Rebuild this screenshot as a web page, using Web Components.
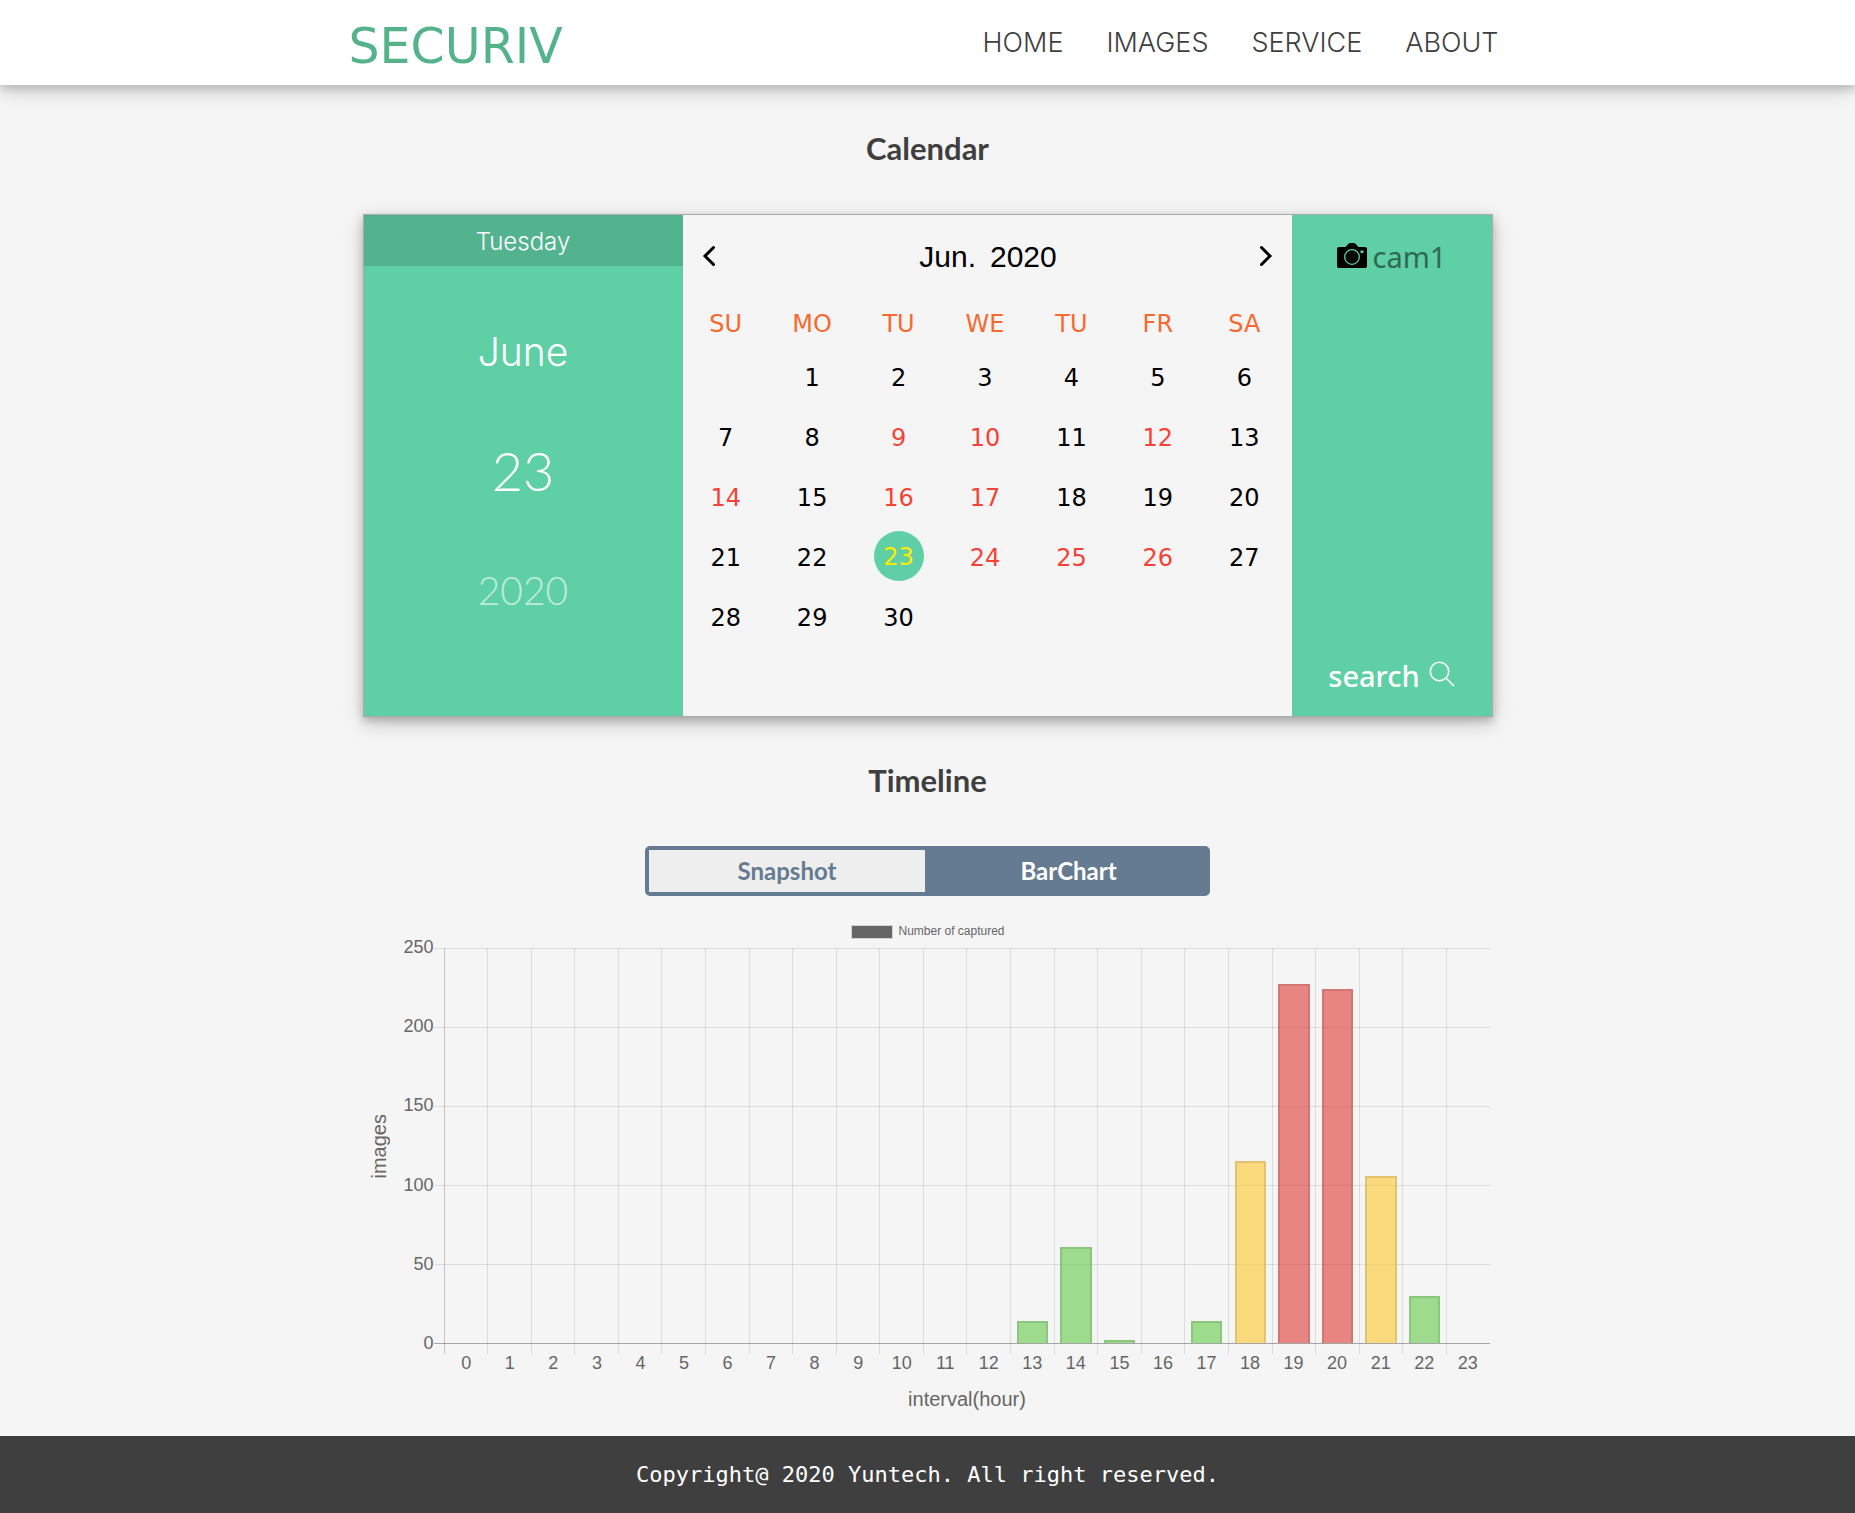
<!DOCTYPE html>
<html lang="en">
<head>
<meta charset="utf-8">
<meta name="viewport" content="width=device-width, initial-scale=1">
<title>SECURIV</title>
<style>
  body { margin: 0; background: #f5f5f5; color: #3f3f3f; font-family: "Noto Sans", sans-serif; }
</style>
</head>
<body>
<securiv-app></securiv-app>
<script>
function define(name, render) {
  customElements.define(name, class extends HTMLElement {
    connectedCallback() {
      if (this.shadowRoot) return;
      const template = document.createElement('template');
      template.innerHTML = render(this);
      this.attachShadow({ mode: 'open' }).append(template.content.cloneNode(true));
    }
  });
}

define('site-header', () => `
  <style>
    :host { display: block; position: relative; background: #fff; box-shadow: 0 4px 8px 0 rgba(0,0,0,.16), 0 6px 20px 0 rgba(0,0,0,.15); }
    .bar { box-sizing: border-box; max-width: 1158px; height: 85px; margin: 0 auto; padding-right: 8px; display: flex; align-items: center; justify-content: space-between; }
    .logo { color: #54b38a; font: 49px/60px "DejaVu Sans", sans-serif; text-decoration: none; padding-top: 8px; }
    nav { display: flex; gap: 43px; }
    nav ::slotted(a) { color: #3f3f3f; font: 300 27px/32px Inter, sans-serif; text-decoration: none; }
  </style>
  <header class="bar"><a class="logo" href="#">SECURIV</a><nav><slot></slot></nav></header>`);

define('page-section', el => `
  <style>
    :host { display: block; }
    h2 { margin: 0; padding-bottom: 2px; text-align: center; font: bold 31px/127px Lato, sans-serif; color: #3f3f3f; }
  </style>
  <section><h2>${el.getAttribute('heading')}</h2><slot></slot></section>`);

define('date-panel', () => `
  <style>
    :host { display: block; background: #5fcfa5; color: #fff; text-align: center; font-family: Lato, sans-serif; }
    .weekday { padding-top: 2px; background: #54b38f; font: 300 24px/49px Inter, sans-serif; }
    .date { display: grid; grid-auto-rows: 120px; align-items: center; padding-top: 24px; font-weight: 300; font-size: 39px; }
    .month { padding-top: 2px; font-family: Inter, sans-serif; }
    .day { font-size: 54px; }
    .year { opacity: .6; }
  </style>
  <div class="weekday">Tuesday</div>
  <div class="date"><span class="month">June</span><span class="day">23</span><span class="year">2020</span></div>`);

define('month-grid', () => {
  const captured = new Set([9, 10, 12, 14, 16, 17, 24, 25, 26]);
  const today = 23;
  let rows = '';
  for (let week = 0; week < 5; week++) {
    rows += '<tr>';
    for (let d = 0; d < 7; d++) {
      const n = week * 7 + d;
      const cls = n === today ? 'today' : captured.has(n) ? 'has' : '';
      rows += `<td class="${cls}">${n > 0 && n < 31 ? `<span>${n}</span>` : ''}</td>`;
    }
    rows += '</tr>';
  }
  return `
  <style>
    :host { display: block; background: #f5f5f5; color: #000; }
    .top { height: 84px; padding: 0 18px; display: flex; align-items: center; justify-content: space-between; }
    .title { display: flex; gap: 14px; padding-left: 2px; font: 30px/34px "Liberation Sans", sans-serif; }
    button { border: 0; padding: 0 0 2px; background: none; width: 16px; color: inherit; }
    svg { display: block; }
    .days { padding-right: 4px; }
    table { width: 100%; table-layout: fixed; border-collapse: collapse; font: 24px/30px "DejaVu Sans", sans-serif; text-align: center; }
    th, td { box-sizing: border-box; padding: 2px 0 0; }
    th { height: 48px; font-weight: 400; color: #f7692f; }
    td { height: 60px; }
    .has { color: #f44336; }
    .today { padding: 0 0 2px; color: #ffeb00; }
    .today span { display: block; box-sizing: border-box; width: 50px; padding-top: 2px; line-height: 48px; margin: 0 auto; border-radius: 50%; background: #5fcfa5; }
  </style>
  <div class="top">
    <button aria-label="Previous month"><svg width="16" height="24" viewBox="0 0 16 24" fill="none" stroke="currentColor" stroke-width="3" stroke-linecap="round"><path d="M12.500 3.500 4 12l8.500 8.500"/></svg></button>
    <div class="title"><span>Jun.</span><span>2020</span></div>
    <button aria-label="Next month"><svg width="16" height="24" viewBox="0 0 16 24" fill="none" stroke="currentColor" stroke-width="3" stroke-linecap="round"><path d="M3.500 3.500 12 12l-8.500 8.500"/></svg></button>
  </div>
  <div class="days"><table>
    <thead><tr>${['SU', 'MO', 'TU', 'WE', 'TU', 'FR', 'SA'].map(d => `<th scope="col">${d}</th>`).join('')}</tr></thead>
    <tbody>${rows}</tbody>
  </table></div>`;
});

define('camera-panel', () => `
  <style>
    :host { display: flex; flex-direction: column; align-items: center; justify-content: space-between; box-sizing: border-box; padding: 22px 0 20px; background: #5fcfa5; }
    button { display: flex; align-items: center; border: 0; padding: 0; background: none; font: 29px/40px "Noto Sans", sans-serif; color: #fff; }
    .cam { gap: 6px; color: #2f6853; }
    .search { gap: 9px; font-weight: 500; }
  </style>
  <button class="cam"><svg width="30" height="30" viewBox="0 1 30 30">
    <path fill="#000" d="M2 6H8.500L11 3.200Q12 2 13.500 2H16.500Q18 2 19 3.200L21.500 6H28Q30 6 30 8V25Q30 27 28 27H2Q0 27 0 25V8Q0 6 2 6Z"/>
    <circle cx="15" cy="16" r="7.300" fill="none" stroke="#5fcfa5" stroke-width="1.300"/>
    <rect x="23.500" y="9.500" width="3" height="2.500" fill="#5fcfa5"/></svg><span>cam1</span></button>
  <button class="search"><span>search</span><svg width="26" height="30" viewBox="0 1 26 30" fill="none" stroke="#fff" stroke-width="1.600">
    <circle cx="10.500" cy="11.500" r="9.200"/><path d="M17 18l8 8"/></svg></button>`);

define('calendar-card', () => `
  <style>
    :host { display: grid; grid-template-columns: 319fr 609fr 200fr; grid-template-rows: 501px; border: 1px solid #aaa; box-shadow: 0 4px 8px 0 rgba(0,0,0,.2), 0 6px 20px 0 rgba(0,0,0,.19); }
  </style>
  <date-panel></date-panel><month-grid></month-grid><camera-panel></camera-panel>`);

define('view-toggle', () => `
  <style>
    :host { display: grid; grid-template-columns: 276fr 281fr; box-sizing: border-box; width: 50%; height: 50px; margin: 0 auto; border: 4px solid #657b91; border-radius: 5px; background: #657b91; }
    button { border: 0; padding: 0; font: bold 24px/28px Lato, sans-serif; color: #657b91; background: #eee; }
    .on { border-left: 6px solid #657b91; color: #fff; background: #657b91; }
  </style>
  <button aria-pressed="false">Snapshot</button><button class="on" aria-pressed="true">BarChart</button>`);

define('bar-chart', () => {
  const counts = [0, 0, 0, 0, 0, 0, 0, 0, 0, 0, 0, 0, 0, 14, 61, 2, 0, 14, 115, 227, 224, 106, 30, 0];
  const level = v => v > 200 ? 'high' : v > 100 ? 'mid' : 'low';
  return `
  <style>
    :host { display: block; padding: 27px 3px 25px 0; color: #666; font-family: "Liberation Sans", sans-serif; }
    .legend { display: flex; justify-content: center; align-items: center; gap: 5px; height: 16px; margin-bottom: 9px; padding-left: 4px; font-size: 12px; line-height: 16px; }
    .swatch { box-sizing: border-box; width: 42px; height: 14px; margin-top: 2px; background: #666; border: 1px solid #d5d5d5; }
    .chart { display: grid; grid-template-columns: 34px 37px 1fr; grid-template-rows: 396px auto auto; }
    .ytitle { justify-self: start; padding-right: 4px; align-self: center; writing-mode: vertical-rl; transform: rotate(180deg); font-size: 20px; line-height: 24px; }
    .yticks { display: flex; flex-direction: column; justify-content: space-between; margin: -11px 0 -9px; text-align: right; font-size: 18px; line-height: 20px; }
    .plot { padding-left: 10px; background:
      linear-gradient(rgba(0,0,0,.25), rgba(0,0,0,.25)) 0 100% / 100% 1px no-repeat,
      repeating-linear-gradient(rgba(0,0,0,.1) 0 1px, transparent 1px 79px); }
    .hours { display: grid; grid-template-columns: repeat(24, 1fr); }
    .col { display: flex; align-items: flex-end; justify-content: center; height: 395px; padding-bottom: 11px; border-left: 1px solid rgba(0,0,0,.1); }
    .col:first-child { border-color: rgba(0,0,0,.2); }
    .bar { box-sizing: border-box; width: 74%; border: 2px solid rgba(0,0,0,.1); border-bottom: 0; }
    .low { background: rgba(97,203,70,.6); }
    .mid { background: rgba(255,200,47,.6); }
    .high { background: rgba(225,58,50,.6); }
    .xticks { grid-column: 3; margin: 9px 0 0 11px; text-align: center; font-size: 18px; line-height: 20px; }
    .xtitle { grid-column: 3; padding: 14px 0 0 11px; text-align: center; font-size: 20px; line-height: 24px; }
  </style>
  <div class="legend"><span class="swatch"></span><span>Number of captured</span></div>
  <div class="chart">
    <div class="ytitle">images</div>
    <div class="yticks">${[250, 200, 150, 100, 50, 0].map(v => `<span>${v}</span>`).join('')}</div>
    <div class="plot"><div class="hours">${counts.map(v => `<div class="col">${v ? `<div class="bar ${level(v)}" style="height:calc(${v}% / 2.5)"></div>` : ''}</div>`).join('')}</div></div>
    <div class="hours xticks">${counts.map((_, h) => `<span>${h}</span>`).join('')}</div>
    <div class="xtitle">interval(hour)</div>
  </div>`;
});

define('site-footer', () => `
  <style>
    :host { display: block; background: #3f3f3f; color: #fff; text-align: center; font: 22px/77px "DejaVu Sans Mono", monospace; }
  </style>
  <footer><slot></slot></footer>`);

define('securiv-app', () => `
  <style>
    :host { display: block; }
    main { max-width: 1130px; margin: 0 auto; }
  </style>
  <site-header><a href="#">HOME</a><a href="#">IMAGES</a><a href="#">SERVICE</a><a href="#">ABOUT</a></site-header>
  <main>
    <page-section heading="Calendar"><calendar-card></calendar-card></page-section>
    <page-section heading="Timeline"><view-toggle></view-toggle><bar-chart></bar-chart></page-section>
  </main>
  <site-footer>Copyright@ 2020 Yuntech. All right reserved.</site-footer>`);
</script>
</body>
</html>
